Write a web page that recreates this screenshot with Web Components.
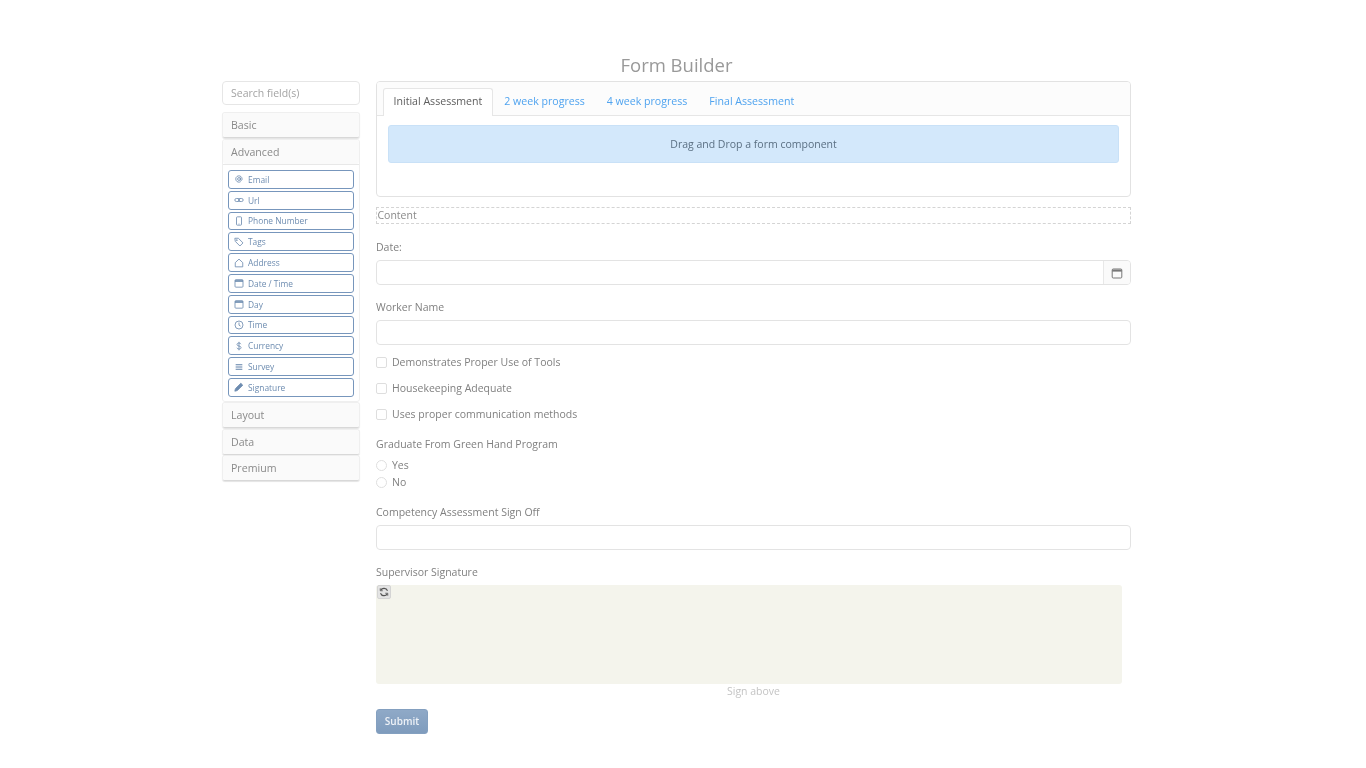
<!DOCTYPE html>
<html lang="en">
<head>
<meta charset="utf-8">
<title>Form Builder</title>
<style>
  html, body { margin: 0; background: #fff; }
  body { font-family: "Open Sans", sans-serif; }
</style>
</head>
<body>
<builder-app>
  <field-sidebar slot="side">
    <side-panel title="Basic"></side-panel>
    <side-panel title="Advanced" open>
      <drag-item icon="at">Email</drag-item>
      <drag-item icon="link">Url</drag-item>
      <drag-item icon="phone">Phone Number</drag-item>
      <drag-item icon="tag">Tags</drag-item>
      <drag-item icon="home">Address</drag-item>
      <drag-item icon="cal">Date / Time</drag-item>
      <drag-item icon="cal">Day</drag-item>
      <drag-item icon="clock">Time</drag-item>
      <drag-item icon="dollar">Currency</drag-item>
      <drag-item icon="list">Survey</drag-item>
      <drag-item icon="pen">Signature</drag-item>
    </side-panel>
    <side-panel title="Layout"></side-panel>
    <side-panel title="Data"></side-panel>
    <side-panel title="Premium"></side-panel>
  </field-sidebar>
  <tab-card slot="main"></tab-card>
  <content-box slot="main">Content</content-box>
  <text-field slot="main" label="Date:" style="margin-top:14px" calendar></text-field>
  <text-field slot="main" label="Worker Name" style="margin-top:13px"></text-field>
  <check-row slot="main" style="margin-top:8px">Demonstrates Proper Use of Tools</check-row>
  <check-row slot="main">Housekeeping Adequate</check-row>
  <check-row slot="main">Uses proper communication methods</check-row>
  <radio-group slot="main" label="Graduate From Green Hand Program"></radio-group>
  <text-field slot="main" label="Competency Assessment Sign Off" style="margin-top:12.5px"></text-field>
  <signature-pad slot="main"></signature-pad>
  <submit-button slot="main">Submit</submit-button>
</builder-app>

<script>
const ICONS = {
  at: '<circle cx="6" cy="6" r="1.7"/><path d="M7.700 4.300v2.600c0 1.300 2 1.200 2-.9a3.800 3.800 0 1 0-1.600 3.100"/>',
  link: '<rect x="1" y="4.200" width="5.600" height="3.600" rx="1.800"/><rect x="5.400" y="4.200" width="5.600" height="3.600" rx="1.800"/>',
  phone: '<rect x="3" y="1" width="6" height="10" rx="1"/><path d="M5.500 9.600h1"/>',
  tag: '<path d="M1 1.500h4.200l5.600 5.600-3.700 3.700L1.500 5.200z"/><circle cx="3.400" cy="3.800" r=".6"/>',
  home: '<path d="M6 1.300 1.500 5.600v5h9v-5z"/>',
  cal: '<rect x="1.200" y="2" width="9.600" height="9" rx="1"/><path d="M1.200 3.600h9.600" stroke-width="2"/>',
  clock: '<circle cx="6" cy="6" r="4.800"/><path d="M6 3v3.200l2 1.200"/>',
  dollar: '<path d="M8.300 3.800C8 2.800 7 2.400 6 2.400c-1.400 0-2.400.7-2.400 1.800C3.600 6.800 8.500 5.400 8.500 7.900 8.500 9 7.400 9.700 6 9.700c-1.200 0-2.200-.5-2.500-1.600M6 1v10.200"/>',
  list: '<path d="M2 3h8M2 5h8M2 7h8M2 9h8"/>',
  pen: '<path d="M1 11l.7-3L8.200 1.500l2.300 2.300L4 10.300z" fill="currentColor"/>'
};

class BuilderApp extends HTMLElement {
  constructor() {
    super();
    this.attachShadow({ mode: "open" });
    this.shadowRoot.innerHTML = `
    <style>
      :host { display: block; width: 909px; margin: 0 0 0 222px; padding: 53px 0 0; color: #777; filter: blur(.4px); }
      h1 { margin: 0; height: 28px; font: 400 18.500px/23px "Open Sans", sans-serif; color: #999; text-align: center; }
      .cols { display: flex; gap: 16px; align-items: flex-start; }
      .main { width: 755px; display: flex; flex-direction: column; }
    </style>
    <h1>Form Builder</h1>
    <div class="cols">
      <slot name="side"></slot>
      <div class="main"><slot name="main"></slot></div>
    </div>`;
  }
}

class FieldSidebar extends HTMLElement {
  constructor() {
    super();
    this.attachShadow({ mode: "open" });
    this.shadowRoot.innerHTML = `
    <style>
      :host { display: block; width: 138px; flex: none; }
      .search { height: 24px; box-sizing: border-box; border: 1px solid #e6e6e6; border-radius: 4px; padding: 0 8px; margin-bottom: 7px; font-size: 10.500px; line-height: 22px; color: #a3a3a3; }
    </style>
    <div class="search">Search field(s)</div>
    <slot></slot>`;
  }
}

class SidePanel extends HTMLElement {
  constructor() {
    super();
    this.attachShadow({ mode: "open" });
    this.shadowRoot.innerHTML = `
    <style>
      :host { display: block; margin-bottom: .5px; }
      .box { border: 1px solid #efefef; border-bottom-color: #d8d8d8; border-radius: 3px; box-shadow: 0 1px 1px #e4e4e4; }
      .head { height: 24px; padding: 0 8px; background: #fafafa; font-size: 10.600px; line-height: 24px; color: #8a8a8a; border-radius: 3px; }
      .body { display: none; padding: 5.500px 5px 2px; border-top: 1px solid #e8e8e8; }
      :host([open]) .body { display: block; }
      :host([open]) .box { border-bottom-color: #efefef; box-shadow: none; }
    </style>
    <div class="box">
      <div class="head"></div>
      <div class="body"><slot></slot></div>
    </div>`;
    this.shadowRoot.querySelector(".head").textContent = this.getAttribute("title");
  }
}

class DragItem extends HTMLElement {
  constructor() {
    super();
    this.attachShadow({ mode: "open" });
    this.shadowRoot.innerHTML = `
    <style>
      :host { display: flex; align-items: center; box-sizing: border-box; height: 18.800px; margin-bottom: 2px; padding-left: 5px; border: 1px solid #7796bc; border-radius: 3px; font-size: 8.400px; color: #6d8cb0; }
      svg { width: 10px; height: 10px; margin-right: 4px; flex: none; fill: none; stroke: currentColor; stroke-width: 1; }
    </style>
    <svg viewBox="0 0 12 12">${ICONS[this.getAttribute("icon")]}</svg>
    <slot></slot>`;
  }
}

class TabCard extends HTMLElement {
  constructor() {
    super();
    this.attachShadow({ mode: "open" });
    this.shadowRoot.innerHTML = `
    <style>
      :host { display: block; box-sizing: border-box; height: 116px; border: 1px solid #e2e2e2; border-radius: 4px; overflow: hidden; }
      .tabs { display: flex; height: 34px; box-sizing: border-box; padding: 6px 6px 0 5.500px; background: #fcfcfc; border-bottom: 1px solid #e6e6e6; font-size: 10.600px; }
      .tab { padding: 0 11px; line-height: 26px; color: #4fa3ef; }
      .tab.on { height: 28px; box-sizing: border-box; color: #5d5d5d; background: #fff; border: 1px solid #e6e6e6; border-bottom: 0; border-radius: 3px 3px 0 0; padding: 0 10px; line-height: 25px; }
      .alert { margin: 9px 11px 0; height: 38px; box-sizing: border-box; background: #d3e8fb; border: 1px solid #c9e1f7; border-radius: 3px; text-align: center; line-height: 36px; font-size: 10.500px; color: #5a6f82; }
    </style>
    <div class="tabs">
      <div class="tab on">Initial Assessment</div>
      <div class="tab">2 week progress</div>
      <div class="tab">4 week progress</div>
      <div class="tab">Final Assessment</div>
    </div>
    <div class="alert">Drag and Drop a form component</div>`;
  }
}

class ContentBox extends HTMLElement {
  constructor() {
    super();
    this.attachShadow({ mode: "open" });
    this.shadowRoot.innerHTML = `
    <style>
      :host { display: block; box-sizing: border-box; height: 17.500px; margin-top: 9.500px; border: 1px dashed #d4d4d4; padding-left: .5px; font-size: 10.500px; line-height: 15.500px; color: #8a8a8a; }
    </style>
    <slot></slot>`;
  }
}

class TextField extends HTMLElement {
  constructor() {
    super();
    this.attachShadow({ mode: "open" });
    const cal = this.hasAttribute("calendar") ? `<div class="addon"><svg viewBox="0 0 12 12">${ICONS.cal}</svg></div>` : "";
    this.shadowRoot.innerHTML = `
    <style>
      :host { display: block; font-size: 10.500px; color: #808080; }
      .label { height: 22px; line-height: 18px; }
      .box { display: flex; height: 25px; box-sizing: border-box; border: 1px solid #e3e3e3; border-radius: 4px; }
      .input { flex: 1; }
      .addon { width: 26px; display: flex; align-items: center; justify-content: center; background: #fafafa; border-left: 1px solid #e8e8e8; border-radius: 0 3px 3px 0; }
      svg { width: 12px; height: 12px; fill: none; stroke: #777; stroke-width: 1; }
    </style>
    <div class="label">${this.getAttribute("label")}</div>
    <div class="box"><div class="input"></div>${cal}</div>`;
  }
}

class CheckRow extends HTMLElement {
  constructor() {
    super();
    this.attachShadow({ mode: "open" });
    this.shadowRoot.innerHTML = `
    <style>
      :host { display: flex; align-items: center; height: 18px; margin-bottom: 8px; font-size: 10.500px; color: #808080; }
      i { width: 9px; height: 9px; margin-right: 5px; border: 1px solid #dedede; border-radius: 2px; }
    </style>
    <i></i><slot></slot>`;
  }
}

class RadioGroup extends HTMLElement {
  constructor() {
    super();
    this.attachShadow({ mode: "open" });
    this.shadowRoot.innerHTML = `
    <style>
      :host { display: block; margin-top: 4px; font-size: 10.500px; color: #808080; }
      .label { height: 17px; line-height: 18px; margin-bottom: 4.500px; }
      .opt { display: flex; align-items: center; height: 17px; }
      i { width: 9px; height: 9px; margin-right: 5px; border: 1px solid #dedede; border-radius: 50%; }
    </style>
    <div class="label">${this.getAttribute("label")}</div>
    <div class="opt"><i></i>Yes</div>
    <div class="opt"><i></i>No</div>`;
  }
}

class SignaturePad extends HTMLElement {
  constructor() {
    super();
    this.attachShadow({ mode: "open" });
    this.shadowRoot.innerHTML = `
    <style>
      :host { display: block; margin-top: 13px; font-size: 10.500px; color: #808080; }
      .label { height: 22px; line-height: 18px; }
      .pad { position: relative; width: 746px; height: 99px; background: #f4f4ec; border-radius: 3px; }
      .reset { position: absolute; left: 1px; top: 0; width: 14px; height: 14px; display: flex; align-items: center; justify-content: center; background: #e4e4e4; border: 1px solid #d4d4d4; border-radius: 2px; box-sizing: border-box; }
      svg { width: 10px; height: 10px; fill: none; stroke: #555; stroke-width: 1.400; }
      .hint { text-align: center; height: 15px; line-height: 15px; color: #c4c4c4; }
    </style>
    <div class="label">Supervisor Signature</div>
    <div class="pad">
      <div class="reset"><svg viewBox="0 0 12 12"><path d="M10.200 4.500A4.500 4.500 0 0 0 2 4M1.800 7.500A4.500 4.500 0 0 0 10 8"/><path d="M1.500 1.500V4.500H4.500M10.500 10.500V7.500H7.500" stroke-width="1"/></svg></div>
    </div>
    <div class="hint">Sign above</div>`;
  }
}

class SubmitButton extends HTMLElement {
  constructor() {
    super();
    this.attachShadow({ mode: "open" });
    this.shadowRoot.innerHTML = `
    <style>
      :host { display: block; align-self: flex-start; box-sizing: border-box; width: 52px; height: 25px; margin-top: 10px; background: linear-gradient(#8fa9c7, #7f9cbd); border: 1px solid #84a0c0; border-radius: 3px; color: #eef2f7; font-size: 10px; font-weight: 600; line-height: 23px; text-align: center; }
    </style>
    <slot></slot>`;
  }
}

customElements.define("builder-app", BuilderApp);
customElements.define("field-sidebar", FieldSidebar);
customElements.define("side-panel", SidePanel);
customElements.define("drag-item", DragItem);
customElements.define("tab-card", TabCard);
customElements.define("content-box", ContentBox);
customElements.define("text-field", TextField);
customElements.define("check-row", CheckRow);
customElements.define("radio-group", RadioGroup);
customElements.define("signature-pad", SignaturePad);
customElements.define("submit-button", SubmitButton);
</script>
</body>
</html>
